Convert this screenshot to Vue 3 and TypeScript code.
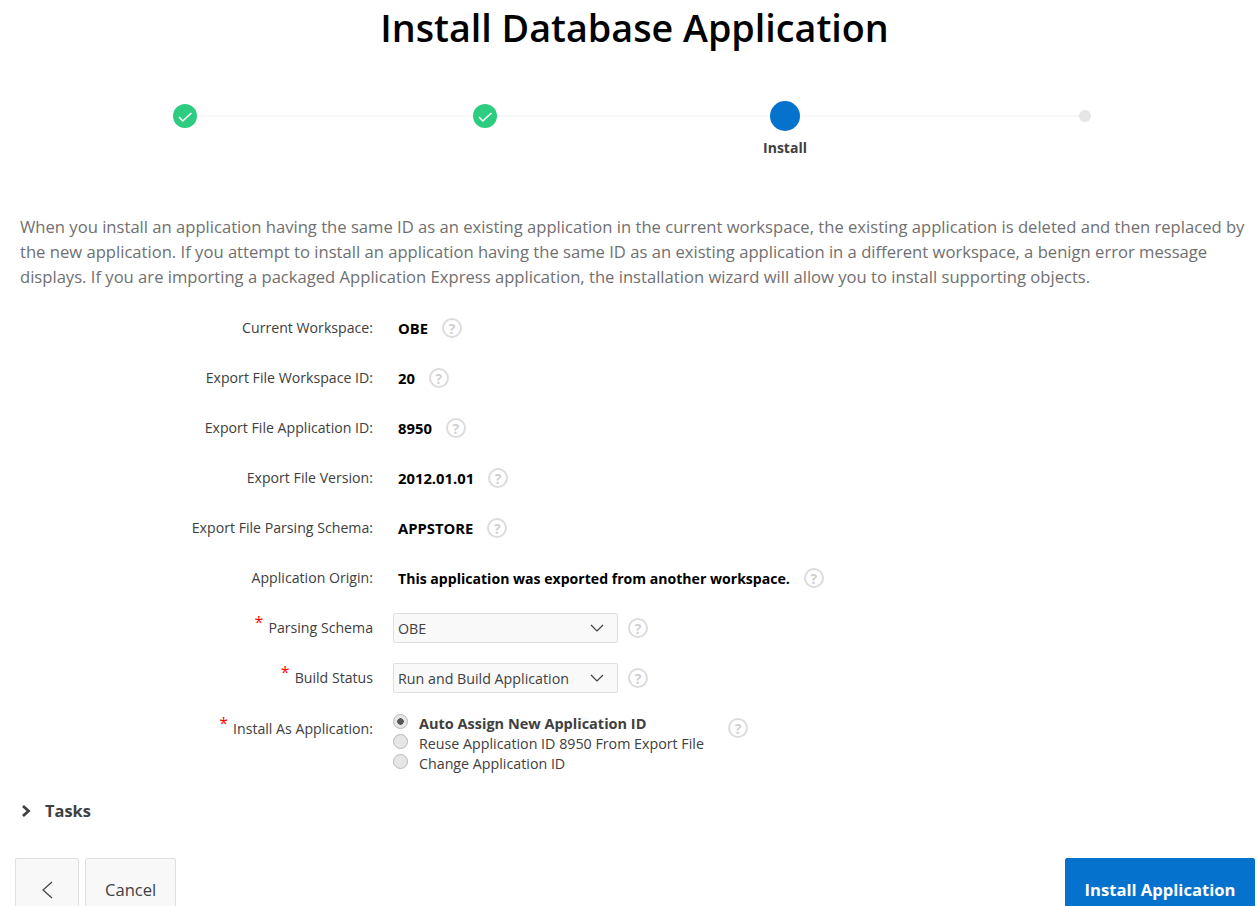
<script setup lang="ts">
  // read-only rows at the top of the form
  const displayRows = [
    { label: 'Current Workspace:', value: 'OBE' },
    { label: 'Export File Workspace ID:', value: '20' },
    { label: 'Export File Application ID:', value: '8950' },
    { label: 'Export File Version:', value: '2012.01.01' },
    { label: 'Export File Parsing Schema:', value: 'APPSTORE' },
    { label: 'Application Origin:', value: 'This application was exported from another workspace.', long: true },
  ]

  const selectRows = [
    { label: 'Parsing Schema', value: 'OBE' },
    { label: 'Build Status', value: 'Run and Build Application' },
  ]

  const installOptions = [
    { text: 'Auto Assign New Application ID', checked: true },
    { text: 'Reuse Application ID 8950 From Export File', checked: false },
    { text: 'Change Application ID', checked: false },
  ]
</script>

<template>
  <div class="page">
    <h1 class="title">Install Database Application</h1>

    <div class="wizard">
      <div class="step done">
        <span class="marker">
          <svg width="16" height="16" viewBox="0 0 16 16"><path d="M2 9 L5.8 13 L14.4 5" fill="none" stroke="#fff" stroke-width="1.5" /></svg>
        </span>
      </div>
      <div class="step done">
        <span class="marker">
          <svg width="16" height="16" viewBox="0 0 16 16"><path d="M2 9 L5.8 13 L14.4 5" fill="none" stroke="#fff" stroke-width="1.5" /></svg>
        </span>
      </div>
      <div class="step current">
        <span class="marker"></span>
        <span class="step-label">Install</span>
      </div>
      <div class="step todo">
        <span class="marker"></span>
      </div>
    </div>

    <p class="intro">
      When you install an application having the same ID as an existing application in the current workspace, the existing application is deleted and then replaced by the new application. If you attempt to install an application having the same ID as an existing application in a different workspace, a benign error message displays. If you are importing a packaged Application Express application, the installation wizard will allow you to install supporting objects.
    </p>

    <div class="form">
      <div class="row" v-for="row in displayRows" :key="row.label">
        <label class="field-label">{{ row.label }}</label>
        <div class="field">
          <span class="display-value" :class="{ long: row.long }">{{ row.value }}</span>
          <span class="help">?</span>
        </div>
      </div>

      <div class="row" v-for="row in selectRows" :key="row.label">
        <label class="field-label"><span class="req">*</span>{{ row.label }}</label>
        <div class="field select-field">
          <div class="select">
            <span>{{ row.value }}</span>
            <svg width="14" height="8" viewBox="0 0 14 8"><path d="M1 1 L7 7 L13 1" fill="none" stroke="#404040" stroke-width="1.2" /></svg>
          </div>
          <span class="help">?</span>
        </div>
      </div>

      <div class="row radio-row">
        <label class="field-label"><span class="req">*</span>Install As Application:</label>
        <div class="field radio-field">
          <div class="radios">
            <div class="radio-item" v-for="opt in installOptions" :key="opt.text" :class="{ checked: opt.checked }">
              <span class="radio"></span>
              <span>{{ opt.text }}</span>
            </div>
          </div>
          <span class="help">?</span>
        </div>
      </div>
    </div>

    <div class="tasks">
      <svg width="12" height="14" viewBox="0 0 12 14"><path d="M3 2 L8.5 7 L3 12" fill="none" stroke="#404040" stroke-width="2.8" /></svg>
      <span>Tasks</span>
    </div>

    <div class="buttons">
      <div class="btn-group">
        <button class="btn back">
          <svg width="14" height="20" viewBox="0 0 14 20"><path d="M12 2 L3 10 L12 18" fill="none" stroke="#404040" stroke-width="1.2" /></svg>
        </button>
        <button class="btn">Cancel</button>
      </div>
      <button class="btn primary">Install Application</button>
    </div>
  </div>
</template>

<style>
  html, body {
    margin: 0;
    height: 906px;
    overflow: hidden;
    background: #fff;
  }
</style>

<style scoped>
  .page {
    width: 1255px;
    font-family: "Open Sans", sans-serif;
    font-size: 14.25px;
    color: #404040;
  }

  .title {
    margin: 0;
    padding: 4px 0 0 14px;
    text-align: center;
    font-size: 37.7px;
    line-height: 48px;
    font-weight: 600;
    color: #000;
  }

  .wizard {
    display: flex;
    margin: 49px 0 0 35px;
    width: 1200px;
  }

  .step {
    position: relative;
    width: 300px;
    height: 60px;
    display: flex;
    flex-direction: column;
    align-items: center;
  }

  /* connecting line to the next step */
  .step::after {
    content: '';
    position: absolute;
    left: 50%;
    top: 14px;
    width: 100%;
    height: 2px;
    background: #f7f7f7;
  }

  .step.todo::after {
    display: none;
  }

  .marker {
    position: relative;
    z-index: 1;
    display: flex;
    align-items: center;
    justify-content: center;
    border-radius: 50%;
  }

  .done .marker {
    width: 24px;
    height: 24px;
    margin-top: 3px;
    background: #2ecc80;
  }

  .current .marker {
    width: 30px;
    height: 30px;
    background: #0572ce;
  }

  .todo .marker {
    width: 12px;
    height: 12px;
    margin-top: 9px;
    background: #e5e5e5;
  }

  .step-label {
    margin-top: 7px;
    font-size: 14px;
    line-height: 20px;
    font-weight: 700;
    color: #404040;
  }

  .intro {
    margin: 53px 0 0 20px;
    font-size: 16.62px;
    line-height: 25px;
    color: #707070;
  }

  .form {
    margin-top: 14px;
  }

  .row {
    display: flex;
    height: 50px;
    align-items: center;
  }

  .field-label {
    width: 373px;
    text-align: right;
    flex-shrink: 0;
    line-height: 20px;
    font-size: 14.15px;
  }

  .req {
    position: relative;
    top: -5px;
    margin-right: 5px;
    color: #f00;
    font-size: 16px;
    line-height: 10px;
  }

  .field {
    display: flex;
    align-items: center;
    margin-left: 25px;
  }

  .display-value {
    font-size: 14.8px;
    font-weight: 700;
    color: #000;
  }

  .display-value.long {
    font-size: 14.08px;
  }

  .help {
    display: inline-flex;
    align-items: center;
    justify-content: center;
    box-sizing: border-box;
    width: 20px;
    height: 20px;
    margin-left: 14px;
    border: 2px solid #dcdcdc;
    border-radius: 50%;
    color: #d0d0d0;
    font-size: 14px;
    font-weight: 700;
  }

  .select-field {
    margin-left: 20px;
  }

  .select {
    box-sizing: border-box;
    width: 225px;
    height: 30px;
    padding: 0 13px 0 4px;
    display: flex;
    align-items: center;
    justify-content: space-between;
    background: #f9f9f9;
    border: 1px solid #dfdfdf;
    border-radius: 2px;
  }

  .select-field .help {
    margin-left: 10px;
  }

  .radio-row {
    align-items: flex-start;
    height: auto;
  }

  .radio-row .field-label {
    padding-top: 16px;
  }

  .radio-field {
    margin-left: 20px;
    align-items: flex-start;
    padding-top: 10px;
  }

  .radios {
    width: 335px;
    display: flex;
    flex-direction: column;
  }

  .radio-item {
    display: flex;
    align-items: center;
    height: 20px;
  }

  .radio-item.checked {
    font-size: 14.5px;
    font-weight: 700;
  }

  .radio {
    box-sizing: border-box;
    width: 15px;
    height: 15px;
    margin-right: 11px;
    border-radius: 50%;
    border: 1px solid #b8b8b8;
    background: #e6e6e6;
    position: relative;
    top: -2px;
  }

  .checked .radio {
    background: radial-gradient(circle, #555 0 3px, #e6e6e6 3.5px);
  }

  .radio-field .help {
    margin-left: 0;
    margin-top: 5px;
  }

  .tasks {
    margin: 26px 0 0 20px;
    display: flex;
    align-items: center;
    gap: 13px;
    font-size: 16.4px;
    line-height: 24px;
    font-weight: 700;
    color: #404040;
  }

  .buttons {
    display: flex;
    justify-content: space-between;
    margin: 35px 0 0 15px;
  }

  .btn-group {
    display: flex;
    gap: 6px;
  }

  .btn {
    box-sizing: border-box;
    height: 62px;
    padding: 0 19px;
    background: #f8f8f8;
    border: 1px solid #dfdfdf;
    border-radius: 2px;
    font-family: inherit;
    font-size: 16.6px;
    color: #404040;
  }

  .back {
    width: 64px;
    padding: 6px 0 0 0;
  }

  .primary {
    width: 190px;
    padding: 0;
    white-space: nowrap;
    background: #0572ce;
    border-color: #0572ce;
    color: #fff;
    font-weight: 700;
  }
</style>
